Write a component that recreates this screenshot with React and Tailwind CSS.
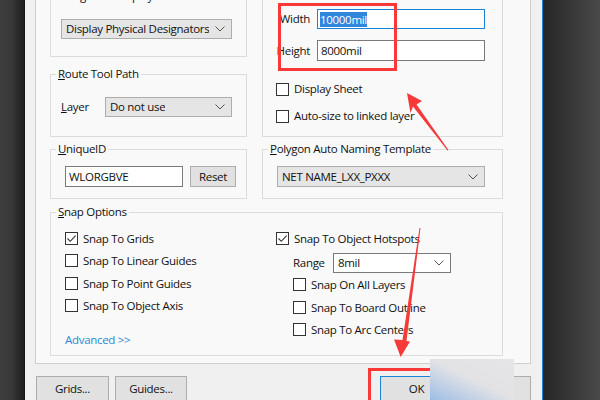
import React from 'react';

function Chevron() {
  return (
    <svg width="10" height="6" viewBox="0 0 10 6" className="shrink-0">
      <path d="M0.5 0.5 L5 5 L9.5 0.5" fill="none" stroke="#555" strokeWidth="1" />
    </svg>
  );
}

function Select({ value, className, white }) {
  return (
    <div
      className={`flex items-center justify-between pl-[4px] pr-[6px] border ${
        white ? 'bg-white border-[#7a7a7a]' : 'bg-[#e5e5e5] border-[#adadad]'
      } ${className}`}
    >
      <span className="truncate">{value}</span>
      <Chevron />
    </div>
  );
}

function Check({ checked, label, className = '' }) {
  return (
    <div className={`flex items-center gap-[5px] ${className}`}>
      <span className="w-[13px] h-[13px] border border-[#333] bg-white flex items-center justify-center shrink-0">
        {checked && (
          <svg width="11" height="11" viewBox="0 0 11 11">
            <path d="M1.5 5.5 L4.3 8.3 L9.6 2.6" fill="none" stroke="#333" strokeWidth="1.1" />
          </svg>
        )}
      </span>
      <span className="whitespace-nowrap">{label}</span>
    </div>
  );
}

function Group({ title, className, children }) {
  return (
    <fieldset className={`border border-[#dcdcdc] ${className}`}>
      {title && <legend className="ml-[5px] px-[2px] leading-[16px]">{title}</legend>}
      {children}
    </fieldset>
  );
}

function Btn({ children, className }) {
  return (
    <div className={`h-[26px] flex items-center justify-center bg-[#e1e1e1] border border-[#adadad] ${className}`}>
      {children}
    </div>
  );
}

export default function App() {
  return (
    <div className="relative w-[600px] h-[400px] overflow-hidden flex font-['Open_Sans',sans-serif] text-[11.5px] tracking-[-0.3px] text-[#111] bg-[#3a3a3a]">
      {/* left backdrop */}
      <div className="w-[25px] h-full bg-gradient-to-r from-[#3e3e3e] via-[#383838] to-[#1e1e1e] border-r border-[#151515]" />

      {/* dialog */}
      <div className="w-[518px] h-full bg-[#f0f0f0] border-r border-[#1883d7] pl-[10px] pr-[11px]">
        <div className="-mt-[21px] pt-[8px] pb-[7px] pl-[14px] bg-[#f9f9f9] border border-[#cfcfcf]">
          {/* row 1 */}
          <div className="flex gap-[15px]">
            <div className="w-[197px] flex flex-col gap-[9px]">
              <Group title="Designator Display" className="h-[69px]">
                <Select value="Display Physical Designators" className="ml-[10px] mt-[15px] w-[171px] h-[20px]" />
              </Group>
              <Group title={<span><span className="underline">R</span>oute Tool Path</span>} className="h-[71px]">
                <div className="flex items-center mt-[15px] ml-[10px]">
                  <span className="w-[44px]"><span className="underline">L</span>ayer</span>
                  <Select value="Do not use" className="w-[127px] h-[20px]" />
                </div>
              </Group>
            </div>
            <Group className="w-[241px] h-[141px] mt-[8px]">
              <div className="flex flex-col mt-[12px]">
                <div className="flex items-center">
                  <span className="w-[47px] text-right">Width</span>
                  <div className="ml-[7px] w-[168px] h-[20px] bg-white border border-[#1883d7] flex items-center px-[2px]">
                    <span className="bg-[#2f86dc] text-white leading-[15px]">10000mil</span>
                  </div>
                </div>
                <div className="flex items-center mt-[11px]">
                  <span className="w-[48px] text-right -ml-[1px]">Height</span>
                  <div className="ml-[7px] w-[168px] h-[21px] bg-white border border-[#7a7a7a] flex items-center px-[3px]">
                    8000mil
                  </div>
                </div>
                <Check label="Display Sheet" className="ml-[13px] mt-[20px] h-[16px]" />
                <Check label="Auto-size to linked layer" className="ml-[13px] mt-[11px] h-[16px]" />
              </div>
            </Group>
          </div>

          {/* row 2 */}
          <div className="flex gap-[15px] mt-[4px]">
            <Group title={<span><span className="underline">U</span>niqueID</span>} className="w-[197px] h-[58px]">
              <div className="flex mt-[9px] ml-[14px] gap-[7px]">
                <div className="w-[118px] h-[21px] bg-white border border-[#7a7a7a] flex items-center px-[3px]">WLORGBVE</div>
                <Btn className="w-[46px] !h-[21px]">Reset</Btn>
              </div>
            </Group>
            <Group title={<span><span className="underline">P</span>olygon Auto Naming Template</span>} className="w-[241px] h-[58px]">
              <Select value="NET NAME_LXX_PXXX" className="ml-[14px] mt-[9px] w-[208px] h-[21px]" />
            </Group>
          </div>

          {/* row 3 */}
          <Group title={<span><span className="underline">S</span>nap Options</span>} className="w-[453px] h-[152px] mt-[5px]">
            <div className="flex mt-[7px] ml-[13px]">
              <div className="w-[212px] flex flex-col">
                <Check checked label="Snap To Grids" className="h-[22.5px] ml-[1px]" />
                <Check label="Snap To Linear Guides" className="h-[22.5px] ml-[1px]" />
                <Check label="Snap To Point Guides" className="h-[22.5px] ml-[1px]" />
                <Check label="Snap To Object Axis" className="h-[22.5px] ml-[1px]" />
                <span className="mt-[15px] ml-[1px] text-[#2b88d8] leading-[16px]">Advanced &gt;&gt;</span>
              </div>
              <div className="flex flex-col">
                <Check checked label="Snap To Object Hotspots" className="h-[22.5px]" />
                <div className="flex items-center h-[22px] mt-[2px] ml-[17px]">
                  <span className="w-[40px]">Range</span>
                  <Select white value="8mil" className="w-[118px] h-[20px]" />
                </div>
                <Check label="Snap On All Layers" className="h-[22.5px] ml-[17px]" />
                <Check label="Snap To Board Outline" className="h-[22.5px] ml-[17px]" />
                <Check label="Snap To Arc Centers" className="h-[22.5px] ml-[17px]" />
              </div>
            </div>
          </Group>
        </div>

        {/* bottom buttons */}
        <div className="flex mt-[12px] pl-[1px]">
          <Btn className="w-[73px]">Grids...</Btn>
          <Btn className="w-[72px] ml-[6px]">Guides...</Btn>
          <Btn className="w-[73px] ml-auto !border-[#1883d7]">OK</Btn>
          <Btn className="w-[72px] ml-[6px]">Cancel</Btn>
        </div>
      </div>

      {/* right backdrop */}
      <div className="flex-1 h-full bg-gradient-to-r from-[#262626] to-[#4a4a4a]" />

      {/* annotations */}
      <div className="absolute left-[278px] top-[3px] w-[119px] h-[68px] border-[3px] border-[#fb3838]" />
      <div className="absolute left-[368px] top-[368px] w-[90px] h-[40px] border-[3px] border-[#fb3838]" />
      <svg className="absolute left-0 top-0" width="600" height="400" viewBox="0 0 600 400">
        <polygon points="407,93 422,101 416.5,104.5 448.5,150 447.5,150.5 413,106.5 410.5,113" fill="#f53a3a" />
        <polygon points="400.7,357 394,339.5 402.5,340 419.5,228 420.5,228 406.5,341 410,341.5" fill="#f53a3a" />
      </svg>
      <div className="absolute left-[430px] top-[359px] w-[84px] h-[41px] bg-gradient-to-tr from-[#9dbde6] via-[#e2e2e4] to-[#e6e4e6]" />
    </div>
  );
}
